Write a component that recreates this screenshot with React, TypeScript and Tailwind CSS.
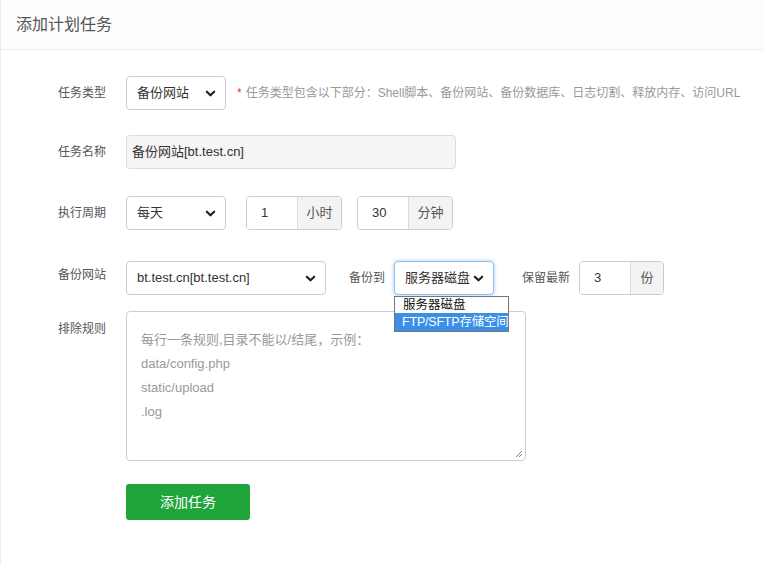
import React from 'react';

const font = { fontFamily: '"Liberation Sans", "Noto Sans CJK SC", sans-serif' };

const Chevron = () => (
  <svg width="11" height="11" viewBox="0 0 12 12" className="shrink-0">
    <path d="M2 4 L6 8 L10 4" fill="none" stroke="#222" strokeWidth="2.4" strokeLinecap="round" strokeLinejoin="round" />
  </svg>
);

interface SelectProps {
  value: string;
  width: string;
  focused?: boolean;
}

const FakeSelect: React.FC<SelectProps> = ({ value, width, focused }) => (
  <div
    className={`${width} h-[34px] flex items-center justify-between pl-[10px] pr-[9px] rounded-[4px] bg-white text-[13px] text-[#333] border ${
      focused ? 'border-[#8fbff0] shadow-[0_0_4px_rgba(60,140,230,0.45)]' : 'border-[#ccc]'
    }`}
  >
    <span className="whitespace-nowrap">{value}</span>
    <Chevron />
  </div>
);

const InputGroup: React.FC<{ value: string; unit: string; inputW: string; unitW: string }> = ({
  value,
  unit,
  inputW,
  unitW
}) => (
  <div className="flex h-[34px] border border-[#ccc] rounded-[4px] overflow-hidden text-[13px] text-[#333]">
    <div className={`${inputW} flex items-center pl-[14px] bg-white`}>{value}</div>
    <div className={`${unitW} flex items-center justify-center bg-[#f3f3f3] border-l border-[#ddd] text-[#555]`}>
      {unit}
    </div>
  </div>
);

const Label: React.FC<{ text: string; className?: string }> = ({ text, className = '' }) => (
  <div className={`w-[105px] shrink-0 text-right text-[12px] text-[#555] ${className}`}>{text}</div>
);

export default function App() {
  return (
    <div style={font} className="w-[764px] h-[565px] bg-white border-l border-[#eee] relative overflow-hidden">
      {/* 标题 */}
      <div className="h-[50px] flex items-center pl-[15px] border-b border-[#ececec] bg-[#fdfdfd]">
        <span className="text-[16px] text-[#555]">添加计划任务</span>
      </div>

      <div className="pt-[26px]">
        {/* 任务类型 */}
        <div className="flex items-center">
          <Label text="任务类型" />
          <div className="ml-[20px]">
            <FakeSelect value="备份网站" width="w-[100px]" />
          </div>
          <span className="ml-[11px] text-[#e33] text-[12px]">*</span>
          <span className="ml-[4px] text-[12px] text-[#999] whitespace-nowrap">
            任务类型包含以下部分：Shell脚本、备份网站、备份数据库、日志切割、释放内存、访问URL
          </span>
        </div>

        {/* 任务名称 */}
        <div className="flex items-center mt-[25px]">
          <Label text="任务名称" />
          <div className="ml-[20px] w-[330px] h-[34px] flex items-center pl-[5px] rounded-[4px] bg-[#f5f5f5] border border-[#ddd] text-[13px] text-[#333]">
            备份网站[bt.test.cn]
          </div>
        </div>

        {/* 执行周期 */}
        <div className="flex items-center mt-[27px]">
          <Label text="执行周期" />
          <div className="ml-[20px]">
            <FakeSelect value="每天" width="w-[100px]" />
          </div>
          <div className="ml-[20px]">
            <InputGroup value="1" unit="小时" inputW="w-[50px]" unitW="w-[44px]" />
          </div>
          <div className="ml-[15px]">
            <InputGroup value="30" unit="分钟" inputW="w-[50px]" unitW="w-[44px]" />
          </div>
        </div>

        {/* 备份网站 */}
        <div className="flex items-center mt-[31px] relative">
          <Label text="备份网站" className="-mt-[6px]" />
          <div className="ml-[20px]">
            <FakeSelect value="bt.test.cn[bt.test.cn]" width="w-[200px]" />
          </div>
          <span className="ml-[23px] text-[12px] text-[#555]">备份到</span>
          <div className="ml-[9px] relative">
            <FakeSelect value="服务器磁盘" width="w-[100px]" focused />
            {/* 下拉列表 */}
            <div className="absolute left-0 top-[35px] w-[115px] bg-white border border-[#767676] z-10 text-[12.5px] leading-[16px] whitespace-nowrap overflow-hidden">
              <div className="pl-[8px] h-[16px] text-[#111]">服务器磁盘</div>
              <div className="pl-[7px] h-[18px] leading-[18px] bg-[#3b8fe6] text-white tracking-[-0.2px]">FTP/SFTP存储空间</div>
            </div>
          </div>
          <span className="ml-[28px] text-[12px] text-[#555]">保留最新</span>
          <div className="ml-[9px]">
            <InputGroup value="3" unit="份" inputW="w-[50px]" unitW="w-[33px]" />
          </div>
        </div>

        {/* 排除规则 */}
        <div className="flex items-start mt-[16px]">
          <Label text="排除规则" className="pt-[9px]" />
          <div className="ml-[20px] w-[400px] h-[150px] rounded-[4px] border border-[#ccc] bg-white relative pl-[14px] pt-[16px] text-[13px] leading-[24px] text-[#999]">
            <div>每行一条规则,目录不能以/结尾，示例：</div>
            <div>data/config.php</div>
            <div>static/upload</div>
            <div>.log</div>
            <svg width="9" height="9" viewBox="0 0 9 9" className="absolute right-[2px] bottom-[2px]">
              <path d="M8 2 L2 8 M8 5 L5 8" stroke="#888" strokeWidth="1" />
            </svg>
          </div>
        </div>

        {/* 按钮 */}
        <div className="flex mt-[23px]">
          <div className="w-[105px] shrink-0" />
          <button className="ml-[20px] w-[124px] h-[36px] rounded-[3px] bg-[#20a53a] text-white text-[14px]">
            添加任务
          </button>
        </div>
      </div>
    </div>
  );
}
